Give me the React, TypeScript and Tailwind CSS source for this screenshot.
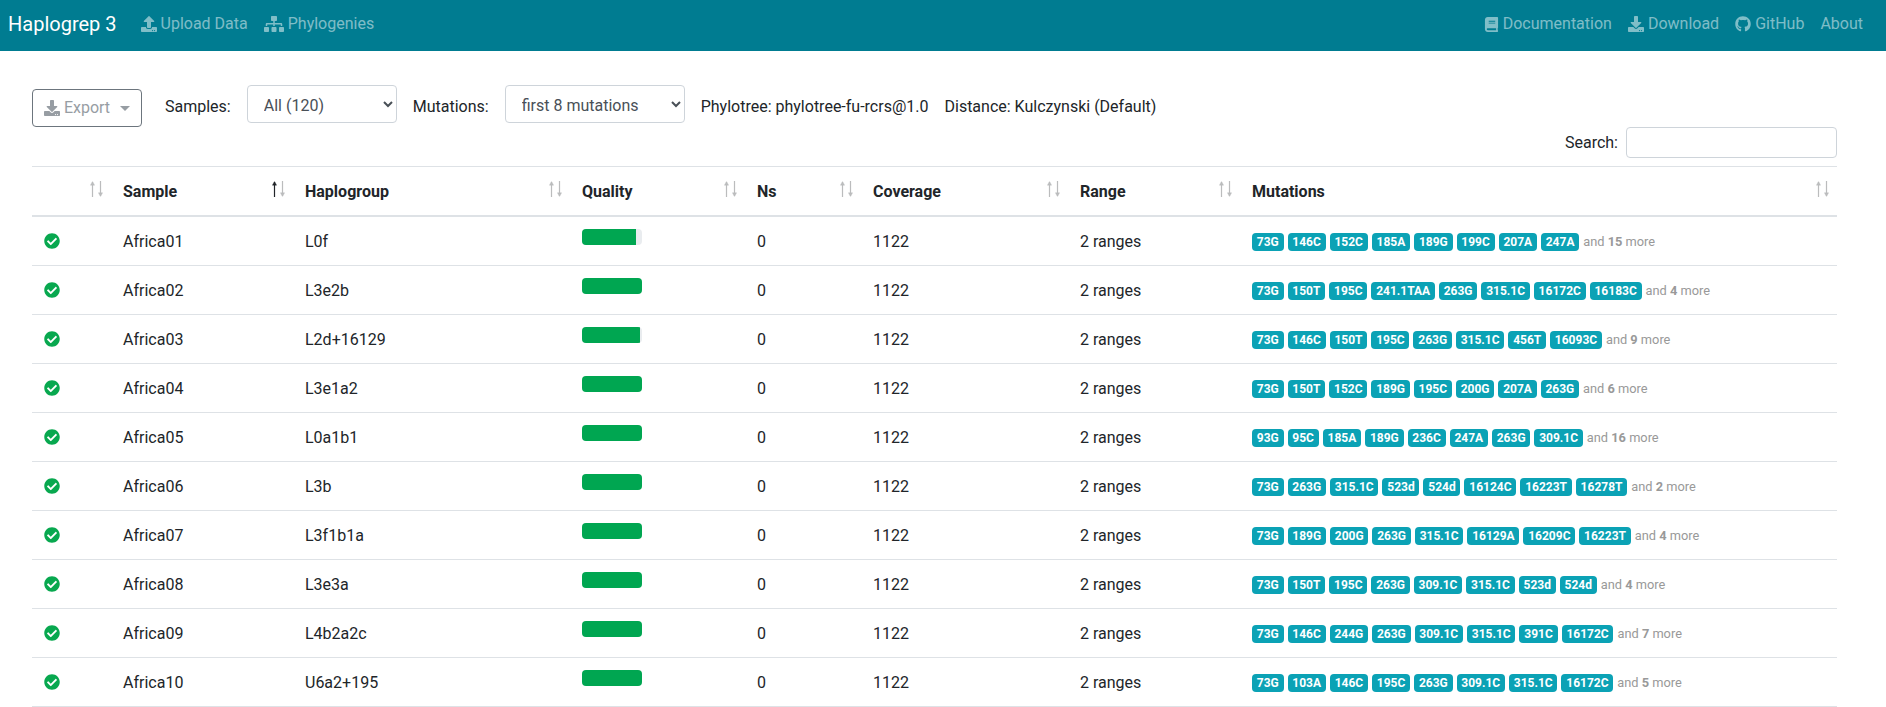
import { FaBook, FaCheckCircle, FaDownload, FaGithub, FaSitemap, FaUpload } from 'react-icons/fa';

interface SampleRow {
  name: string;
  haplogroup: string;
  quality: number;
  mutations: string[];
  more: number;
}

const ROWS: SampleRow[] = [
  { name: 'Africa01', haplogroup: 'L0f', quality: 90, mutations: ['73G', '146C', '152C', '185A', '189G', '199C', '207A', '247A'], more: 15 },
  { name: 'Africa02', haplogroup: 'L3e2b', quality: 100, mutations: ['73G', '150T', '195C', '241.1TAA', '263G', '315.1C', '16172C', '16183C'], more: 4 },
  { name: 'Africa03', haplogroup: 'L2d+16129', quality: 97, mutations: ['73G', '146C', '150T', '195C', '263G', '315.1C', '456T', '16093C'], more: 9 },
  { name: 'Africa04', haplogroup: 'L3e1a2', quality: 100, mutations: ['73G', '150T', '152C', '189G', '195C', '200G', '207A', '263G'], more: 6 },
  { name: 'Africa05', haplogroup: 'L0a1b1', quality: 100, mutations: ['93G', '95C', '185A', '189G', '236C', '247A', '263G', '309.1C'], more: 16 },
  { name: 'Africa06', haplogroup: 'L3b', quality: 100, mutations: ['73G', '263G', '315.1C', '523d', '524d', '16124C', '16223T', '16278T'], more: 2 },
  { name: 'Africa07', haplogroup: 'L3f1b1a', quality: 100, mutations: ['73G', '189G', '200G', '263G', '315.1C', '16129A', '16209C', '16223T'], more: 4 },
  { name: 'Africa08', haplogroup: 'L3e3a', quality: 100, mutations: ['73G', '150T', '195C', '263G', '309.1C', '315.1C', '523d', '524d'], more: 4 },
  { name: 'Africa09', haplogroup: 'L4b2a2c', quality: 100, mutations: ['73G', '146C', '244G', '263G', '309.1C', '315.1C', '391C', '16172C'], more: 7 },
  { name: 'Africa10', haplogroup: 'U6a2+195', quality: 100, mutations: ['73G', '103A', '146C', '195C', '263G', '309.1C', '315.1C', '16172C'], more: 5 },
];

function NavLink({ icon, label }: { icon?: React.ReactNode; label: string }) {
  return (
    <a className="flex items-center gap-1 px-2 text-white/50">
      {icon}
      <span>{label}</span>
    </a>
  );
}

// thin sort arrow, points up unless flipped
function SortArrow({ className }: { className: string }) {
  return (
    <svg width="5" height="16" viewBox="0 0 5 16" className={className} fill="none" stroke="currentColor">
      <path d="M2.5 1v15" strokeWidth="1.2" />
      <path d="M0.4 4.2 2.5 0.6 4.6 4.2Z" fill="currentColor" strokeWidth="0.4" />
    </svg>
  );
}

function HeaderCell({ label, width, active }: { label?: string; width: string; active?: boolean }) {
  return (
    <th className={`relative px-3 pt-[13px] pb-[11px] text-left font-bold border-b-2 border-[#dee2e6] ${width}`}>
      {label}
      <SortArrow className={`absolute right-[16px] top-[14px] text-[#212529] ${active ? '' : 'opacity-30'}`} />
      <SortArrow className="absolute right-[8px] top-[14px] rotate-180 text-[#212529] opacity-30" />
    </th>
  );
}

export default function App() {
  return (
    <div className="h-[707px] overflow-hidden bg-white text-[#212529] text-base font-['Roboto',sans-serif]">
      {/* Navbar */}
      <nav className="flex h-[51px] items-center justify-between bg-[#007c91] pb-[3px] pl-2 pr-[15px]">
        <div className="flex items-center">
          <span className="mr-4 text-xl text-white">Haplogrep 3</span>
          <NavLink icon={<FaUpload size={16} />} label="Upload Data" />
          <NavLink icon={<FaSitemap size={20} />} label="Phylogenies" />
        </div>
        <div className="flex items-center">
          <NavLink icon={<FaBook size={15} />} label="Documentation" />
          <NavLink icon={<FaDownload size={16} />} label="Download" />
          <NavLink icon={<FaGithub size={16} />} label="GitHub" />
          <NavLink label="About" />
        </div>
      </nav>

      <main className="pl-8 pr-[49px] pt-8">
        {/* Toolbar */}
        <div className="flex items-start">
          <button className="mt-[6px] flex h-[38px] w-[110px] items-center justify-center gap-1 rounded border border-[#6c757d]">
            <span className="flex items-center gap-1 text-[#6c757d] opacity-70">
              <FaDownload size={16} />
              <span>Export</span>
              <span className="ml-[6px] border-x-[5px] border-t-[5px] border-x-transparent border-t-[#6c757d]" />
            </span>
          </button>
          <span className="ml-[23px] mt-[12px]">Samples:</span>
          <select className="ml-4 mt-[2px] h-[38px] w-[150px] rounded border border-[#ced4da] bg-white pl-3 pt-[2px] text-[#495057]">
            <option>All (120)</option>
          </select>
          <span className="ml-4 mt-[12px]">Mutations:</span>
          <select className="ml-4 mt-[2px] h-[38px] w-[180px] rounded border border-[#ced4da] bg-white pl-3 pt-[2px] text-[#495057]">
            <option>first 8 mutations</option>
          </select>
          <span className="ml-4 mt-[12px]">Phylotree: phylotree-fu-rcrs@1.0</span>
          <span className="ml-4 mt-[12px]">Distance: Kulczynski (Default)</span>
        </div>

        {/* Search */}
        <div className="flex h-[39px] items-start justify-end">
          <label className="mt-[4px] mr-2">Search:</label>
          <input className="h-[31px] w-[211px] rounded border border-[#ced4da] bg-white" />
        </div>

        {/* Samples table */}
        <table className="w-full table-fixed border-collapse border-t border-[#dee2e6]">
          <thead>
            <tr>
              <HeaderCell width="w-[79px]" />
              <HeaderCell label="Sample" width="w-[182px]" active />
              <HeaderCell label="Haplogroup" width="w-[277px]" />
              <HeaderCell label="Quality" width="w-[175px]" />
              <HeaderCell label="Ns" width="w-[116px]" />
              <HeaderCell label="Coverage" width="w-[207px]" />
              <HeaderCell label="Range" width="w-[172px]" />
              <HeaderCell label="Mutations" width="w-[597px]" />
            </tr>
          </thead>
          <tbody>
            {ROWS.map((row) => (
              <tr key={row.name} className="border-b border-[#dee2e6]">
                <td className="p-3 align-top">
                  <FaCheckCircle size={16} className="mt-1 text-[#08a84f]" />
                </td>
                <td className="px-3 pt-[13px] pb-[11px] align-top">{row.name}</td>
                <td className="px-3 pt-[13px] pb-[11px] align-top">{row.haplogroup}</td>
                <td className="p-3 align-top">
                  <div className="h-4 w-[60px] overflow-hidden rounded bg-[#e9ecef]">
                    <div className="h-full bg-[#00a651]" style={{ width: `${row.quality}%` }} />
                  </div>
                </td>
                <td className="px-3 pt-[13px] pb-[11px] align-top">0</td>
                <td className="px-3 pt-[13px] pb-[11px] align-top">1122</td>
                <td className="px-3 pt-[13px] pb-[11px] align-top">2 ranges</td>
                <td className="whitespace-nowrap p-3 align-middle">
                  <div className="flex items-center pt-[2px]">
                    {row.mutations.map((m) => (
                      <span
                        key={m}
                        className="mr-1 rounded bg-[#0ba2b5] px-[4.8px] py-[3px] text-xs leading-3 font-bold text-white"
                      >
                        {m}
                      </span>
                    ))}
                    <small className="text-[12.8px] text-[#999]">
                      and <b>{row.more}</b> more
                    </small>
                  </div>
                </td>
              </tr>
            ))}
          </tbody>
        </table>
      </main>
    </div>
  );
}
